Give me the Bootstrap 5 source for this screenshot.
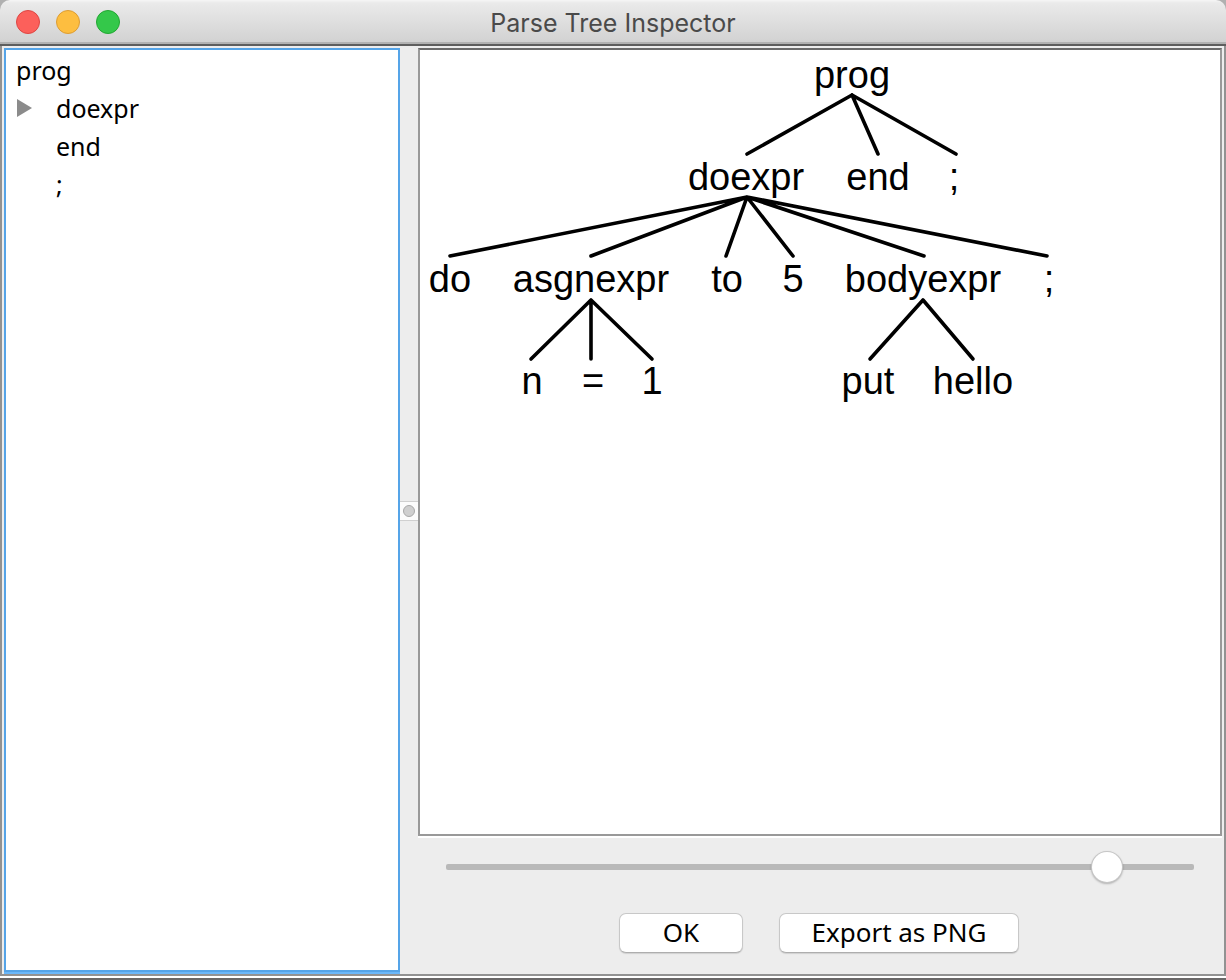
<!DOCTYPE html>
<html lang="en">
<head>
<meta charset="utf-8">
<meta name="viewport" content="width=device-width, initial-scale=1">
<title>Parse Tree Inspector</title>
<link href="https://cdn.jsdelivr.net/npm/bootstrap@5.3.0/dist/css/bootstrap.min.css" rel="stylesheet">
<style>
  body { font-family: "Noto Sans", sans-serif; color: #000; background: #b0b0b0; }
  .window-frame { border-bottom: 2px solid #6a6868; }
  .title-bar { height: 46px; background: linear-gradient(#f6f6f6 0, #eaeaea 3px, #d2d2d2 42px); border-bottom: 2px solid #5e5e5e; border-radius: 10px 10px 0 0; box-shadow: inset 0 -2px #b2b2b2; }
  .title-text { font: 400 25px/46px Inter, sans-serif; color: #4a4a4a; }
  .lights { top: 10px; left: 16px; gap: 16px; }
  .light { width: 24px; height: 24px; padding: 0; border: 1px solid; border-radius: 50%; }
  .light-close { background: #fc605b; border-color: #de4643; }
  .light-min { background: #fdbe40; border-color: #dd9d33; }
  .light-zoom { background: #34c84a; border-color: #22a732; }
  .content-area { background: #ededed; border: solid #929292; border-width: 0 2px 2px; box-shadow: 0 2px #fff; margin-bottom: 2px; padding: 2px 2px 0; }
  .outline-wrap { background: #6cb8fa; padding-bottom: 2px; }
  .outline-pane { width: 396px; background: #fff; border: 2px solid #55a4e8; padding: 1px 10px; }
  .outline-pane li { height: 38px; font-size: 25px; line-height: 38px; }
  .outline-pane ul ul { padding-left: 40px; }
  .twisty { left: 0; top: 10px; width: 16px; height: 18px; padding: 0; border: 0; background: none; }
  .twisty svg { display: block; }
  .divider { width: 18px; }
  .divider-grip { height: 20px; background: #fcfcfc; border: solid #d0d0d0; border-width: 1px 0; }
  .divider-grip span { width: 12px; height: 12px; border-radius: 50%; background: #cfcfcf; border: 1px solid #a9a9a9; }
  .canvas-pane { background: #fff; border: 2px solid #999; border-top-color: #6b6b6b; box-shadow: 0 2px #fff; }
  .canvas-pane svg { display: block; }
  .canvas-pane text { font: 38px "Liberation Sans", sans-serif; text-anchor: middle; }
  .zoom-row { padding: 14px 28px 0; }
  .zoom-slider { appearance: none; display: block; width: 100%; height: 34px; background: none; }
  .zoom-slider::-webkit-slider-runnable-track { height: 6px; border-radius: 2px; background: #b9b9b9; }
  .zoom-slider::-webkit-slider-thumb { appearance: none; width: 30px; height: 30px; margin-top: -12px; border-radius: 50%; background: #fff; box-shadow: 0 0 0 1px #c6c6c6, 0 1px 2px 1px #00000040; }
  .actions { padding: 29px 2px 21px 0; gap: 36px; }
  .btn-mac { height: 40px; padding: 0 0 2px; font-size: 26px; line-height: 36px; color: #000; background: #fff; border: 1px solid #c8c8c8; border-bottom-color: #aeaeae; border-radius: 7px; box-shadow: 0 1px 1px #00000020; }
  .btn-mac:hover { background: #f6f6f6; }
  .btn-ok { width: 124px; }
  .btn-export { width: 240px; }
</style>
</head>
<body>
<div class="window-frame d-flex flex-column vh-100">
  <header class="title-bar position-relative flex-shrink-0 text-center">
    <div class="lights position-absolute d-flex">
      <button type="button" class="light light-close" aria-label="Close"></button>
      <button type="button" class="light light-min" aria-label="Minimize"></button>
      <button type="button" class="light light-zoom" aria-label="Zoom"></button>
    </div>
    <h1 class="title-text m-0">Parse Tree Inspector</h1>
  </header>

  <main class="content-area d-flex flex-grow-1">
    <nav class="outline-wrap d-flex flex-shrink-0" aria-label="Tree outline">
      <div class="outline-pane">
        <ul class="list-unstyled m-0">
          <li>prog
            <ul class="list-unstyled position-relative">
              <li><button type="button" class="twisty position-absolute" aria-label="Expand doexpr"><svg width="16" height="18" aria-hidden="true"><path d="M1 0 16 9 1 18z" fill="#8b8b8b"/></svg></button>doexpr</li>
              <li>end</li>
              <li>;</li>
            </ul>
          </li>
        </ul>
      </div>
    </nav>

    <div class="divider d-flex flex-column justify-content-center flex-shrink-0">
      <div class="divider-grip d-flex align-items-center justify-content-center"><span></span></div>
    </div>

    <section class="d-flex flex-column flex-grow-1">
      <div class="canvas-pane flex-grow-1 overflow-hidden">
        <svg width="800" height="360" role="img" aria-label="Parse tree">
          <g fill="none" stroke="#000" stroke-width="3.6" stroke-linecap="round" stroke-linejoin="round">
            <path d="M327 104 432 45 458 104M432 45 536 104"/>
            <path d="M30 206 327 147 171 206M306 206 327 147 373 206M504 206 327 147 627 206"/>
            <path d="M111 309 171 250 232 309M171 250V309"/>
            <path d="M450 309 503 250 553 309"/>
          </g>
          <g>
            <text x="432" y="38">prog</text>
            <text x="326" y="140">doexpr</text>
            <text x="458" y="140">end</text>
            <text x="534" y="140">;</text>
            <text x="30" y="242">do</text>
            <text x="171" y="242">asgnexpr</text>
            <text x="307" y="242">to</text>
            <text x="373" y="242">5</text>
            <text x="503" y="242">bodyexpr</text>
            <text x="629" y="242">;</text>
            <text x="112" y="344">n</text>
            <text x="173" y="344">=</text>
            <text x="232" y="344">1</text>
            <text x="448" y="344">put</text>
            <text x="553" y="344">hello</text>
          </g>
        </svg>
      </div>
      <div class="zoom-row">
        <input type="range" class="zoom-slider m-0 p-0" min="0" max="100" value="90" aria-label="Tree zoom">
      </div>
      <div class="actions d-flex justify-content-center">
        <button type="button" class="btn btn-mac btn-ok">OK</button>
        <button type="button" class="btn btn-mac btn-export">Export as PNG</button>
      </div>
    </section>
  </main>
</div>
<script src="https://cdn.jsdelivr.net/npm/bootstrap@5.3.0/dist/js/bootstrap.bundle.min.js"></script>
</body>
</html>
